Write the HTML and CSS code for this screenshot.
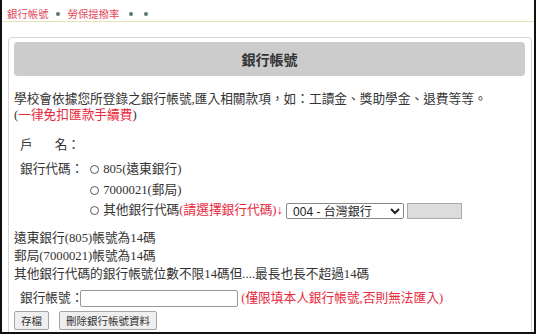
FILE: index.html
```html
<!DOCTYPE html>
<html lang="zh-Hant">
<head>
  <meta charset="UTF-8" />
  <title>銀行帳號</title>
  <link rel="stylesheet" href="styles.css">
</head>
<body>
  <div class="page">
    <div class="nav">
      <a class="nav-link">銀行帳號</a>
      <span class="dot first"></span>
      <a class="nav-link">勞保提撥率</a>
      <span class="dot second"></span>
      <span class="dot third"></span>
    </div>

    <div class="panel">
      <div class="panel-title">銀行帳號</div>

      <p class="intro">
        學校會依據您所登錄之銀行帳號,匯入相關款項，如：工讀金、獎助學金、退費等等。<br>
        (<span class="red">一律免扣匯款手續費</span>)
      </p>

      <table class="form-table">
        <tr>
          <td class="label">戶<span class="name-gap"></span>名：</td>
          <td></td>
        </tr>
        <tr>
          <td class="label">銀行代碼：</td>
          <td>
            <div class="radio-row"><input type="radio" name="bank"> 805(遠東銀行)</div>
            <div class="radio-row"><input type="radio" name="bank"> 7000021(郵局)</div>
            <div class="radio-row">
              <input type="radio" name="bank"> 其他銀行代碼<span class="red">(請選擇銀行代碼)↓</span>
              <select class="bank-select">
                <option>004 - 台灣銀行</option>
              </select>
              <input type="text" class="code-box" disabled>
            </div>
          </td>
        </tr>
      </table>

      <div class="notes">
        <div>遠東銀行(805)帳號為14碼</div>
        <div>郵局(7000021)帳號為14碼</div>
        <div>其他銀行代碼的銀行帳號位數不限14碼但....最長也長不超過14碼</div>
      </div>

      <div class="acct-row">
        <span class="acct-label">銀行帳號：</span><input type="text" class="acct-input">
        <span class="red">(僅限填本人銀行帳號,否則無法匯入)</span>
      </div>

      <div class="buttons">
        <button>存檔</button>
        <button>刪除銀行帳號資料</button>
      </div>
    </div>
  </div>
</body>
</html>
```

FILE: styles.css
```css
body {
  margin: 0;
  background: #fff;
  font-family: 'Liberation Serif', 'Noto Sans CJK TC', serif;
  font-size: 12.7px;
  color: #333;
}

.page {
  height: 334px;
  box-sizing: border-box;
  border: 2px solid #111;
  border-top: none;
  overflow: hidden;
}

.nav {
  height: 22px;
  box-sizing: border-box;
  padding: 7px 0 0 5px;
  border-bottom: 1px solid #e2e2b4;
  font-family: 'Noto Sans CJK TC', sans-serif;
  font-size: 10.4px;
  line-height: 14px;
  display: flex;
  align-items: center;
  white-space: nowrap;
}

.nav-link {
  color: #e2475c;
}

.dot {
  width: 4px;
  height: 4px;
  border-radius: 50%;
  background: #5b7770;
}

.dot.first {
  margin: 0 8px 0 7px;
}

.dot.second {
  margin-left: 9px;
}

.dot.third {
  margin-left: 11px;
}

.panel {
  margin: 15px 2px 0 6px;
  padding: 4px 6px 0 5px;
  border: 1px solid #d6d6d6;
  border-radius: 4px;
  height: 400px;
}

.panel-title {
  height: 34px;
  line-height: 34px;
  background: #cccccc;
  border-radius: 4px;
  text-align: center;
  font-family: 'Noto Sans CJK TC', sans-serif;
  font-weight: bold;
  font-size: 14px;
  color: #333;
}

.intro {
  margin: 15px 0 0;
  line-height: 16px;
}

.red {
  color: #e8283c;
}

.form-table {
  margin-top: 12px;
  border-spacing: 0;
}

.form-table td {
  padding: 0 0 0 6px;
  vertical-align: top;
  line-height: 20px;
}

.form-table td.label {
  width: 64px;
}

.form-table tr:first-child td {
  height: 24px;
}

.name-gap {
  display: inline-block;
  width: 22px;
}

.radio-row {
  height: 20.5px;
  line-height: 20px;
  white-space: nowrap;
}

.radio-row input[type=radio] {
  appearance: none;
  width: 9px;
  height: 9px;
  margin: 0 1px 0 0;
  border: 1px solid #555;
  border-radius: 50%;
  vertical-align: -1px;
}

.bank-select {
  width: 118px;
  height: 16px;
  margin-left: 0;
  padding: 0 0 0 2px;
  font-family: 'Liberation Sans', 'Noto Sans CJK TC', sans-serif;
  font-size: 12px;
  color: #222;
  border: 1px solid #888;
  border-radius: 2px;
  background: #fff;
  vertical-align: middle;
}

.code-box {
  width: 55px;
  height: 16px;
  box-sizing: border-box;
  margin-left: 0;
  background: #dcdcdc;
  border: 1px solid #aaa;
  vertical-align: middle;
}

.notes {
  margin-top: 8px;
}

.notes div {
  height: 18px;
  line-height: 18px;
}

.acct-row {
  margin-top: 5px;
  padding-left: 6px;
  height: 20px;
  line-height: 20px;
  white-space: nowrap;
}

.acct-label {
  display: inline-block;
  width: 60px;
}

.acct-input {
  width: 158px;
  height: 17px;
  box-sizing: border-box;
  margin: 0;
  border: 1px solid #999;
  border-radius: 2px;
  vertical-align: middle;
}

.buttons {
  margin-top: 3px;
  display: flex;
  gap: 10px;
}

button {
  height: 19px;
  padding: 0 6px;
  font-family: 'Noto Sans CJK TC', sans-serif;
  font-size: 10.5px;
  line-height: 17px;
  color: #333;
  background: #efefef;
  border: 1px solid #a5a5a5;
  border-radius: 2px;
}
```
